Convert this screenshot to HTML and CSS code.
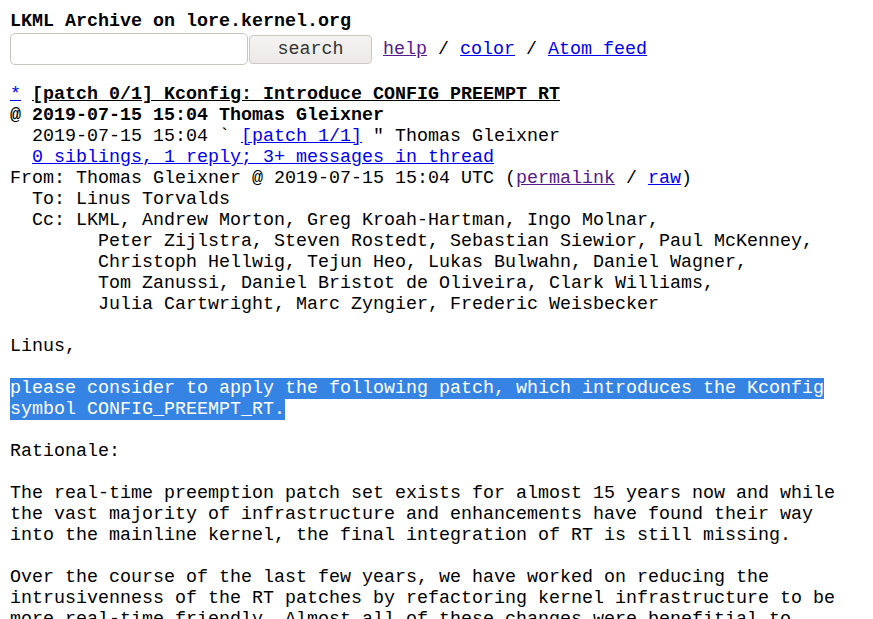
FILE: index.html
```html
<!DOCTYPE html>
<html>
<head>
<meta charset="utf-8">
<title>[patch 0/1] Kconfig: Introduce CONFIG_PREEMPT_RT - Thomas Gleixner</title>
<link rel="stylesheet" href="styles.css">
</head>
<body>
<form class="top">
<div class="title">LKML Archive on lore.kernel.org</div>
<div class="row"><input class="q" type="text" name="q"><button class="btn" type="button">search</button><span class="links"> <a class="v" href="#help">help</a> / <a href="#color">color</a> / <a href="#atom">Atom feed</a></span></div>
</form>
<pre class="msg"><a href="#r">*</a> <u><b>[patch 0/1] Kconfig: Introduce CONFIG_PREEMPT_RT</b></u>
<b>@ 2019-07-15 15:04 Thomas Gleixner</b>
  2019-07-15 15:04 ` <a href="#p1">[patch 1/1]</a> " Thomas Gleixner
  <a href="#t">0 siblings, 1 reply; 3+ messages in thread</a>
From: Thomas Gleixner @ 2019-07-15 15:04 UTC (<a class="v" href="#pl">permalink</a> / <a href="#raw">raw</a>)
  To: Linus Torvalds
  Cc: LKML, Andrew Morton, Greg Kroah-Hartman, Ingo Molnar,
        Peter Zijlstra, Steven Rostedt, Sebastian Siewior, Paul McKenney,
        Christoph Hellwig, Tejun Heo, Lukas Bulwahn, Daniel Wagner,
        Tom Zanussi, Daniel Bristot de Oliveira, Clark Williams,
        Julia Cartwright, Marc Zyngier, Frederic Weisbecker

Linus,

<span class="sel">please consider to apply the following patch, which introduces the Kconfig
symbol CONFIG_PREEMPT_RT.</span>

Rationale:

The real-time preemption patch set exists for almost 15 years now and while
the vast majority of infrastructure and enhancements have found their way
into the mainline kernel, the final integration of RT is still missing.

Over the course of the last few years, we have worked on reducing the
intrusivenness of the RT patches by refactoring kernel infrastructure to be
more real-time friendly. Almost all of these changes were benefitial to
the mainline kernel as well.
</pre>
</body>
</html>
```

FILE: styles.css
```css
html, body {
  margin: 0;
  background: #ffffff;
  color: #000000;
}

body {
  padding: 11px 10px 0 10px;
  font-family: "Liberation Mono", monospace;
  font-size: 18.33px;
  line-height: 21px;
}

a {
  color: #0000ee;
}

a.v {
  color: #551a8b;
}

.top {
  margin: 0;
}

.title {
  font-weight: bold;
  height: 21px;
  white-space: pre;
}

.row {
  display: flex;
  align-items: flex-start;
  height: 32px;
  margin-top: 1px;
}

.q {
  box-sizing: border-box;
  width: 238px;
  height: 32px;
  margin: 0;
  padding: 0 6px;
  border: 1px solid #c9c5c1;
  border-radius: 5px;
  background: #ffffff;
  font-family: "Liberation Mono", monospace;
  font-size: 18.33px;
  outline: none;
}

.btn {
  box-sizing: border-box;
  width: 123px;
  height: 29px;
  margin: 2px 0 0 1px;
  padding: 0;
  border: 1px solid #cdc8c3;
  border-radius: 4px;
  background: linear-gradient(#f4f3f2, #ebeae9);
  color: #333333;
  font-family: "Liberation Mono", monospace;
  font-size: 18.33px;
  line-height: 25px;
}

.links {
  white-space: pre;
  margin-top: 6px;
  line-height: 21px;
}

.msg {
  margin: 19px 0 0 0;
  font-family: "Liberation Mono", monospace;
  font-size: 18.33px;
  line-height: 21px;
  white-space: pre;
}

.sel {
  background: #3584e4;
  color: #ffffff;
}
```
